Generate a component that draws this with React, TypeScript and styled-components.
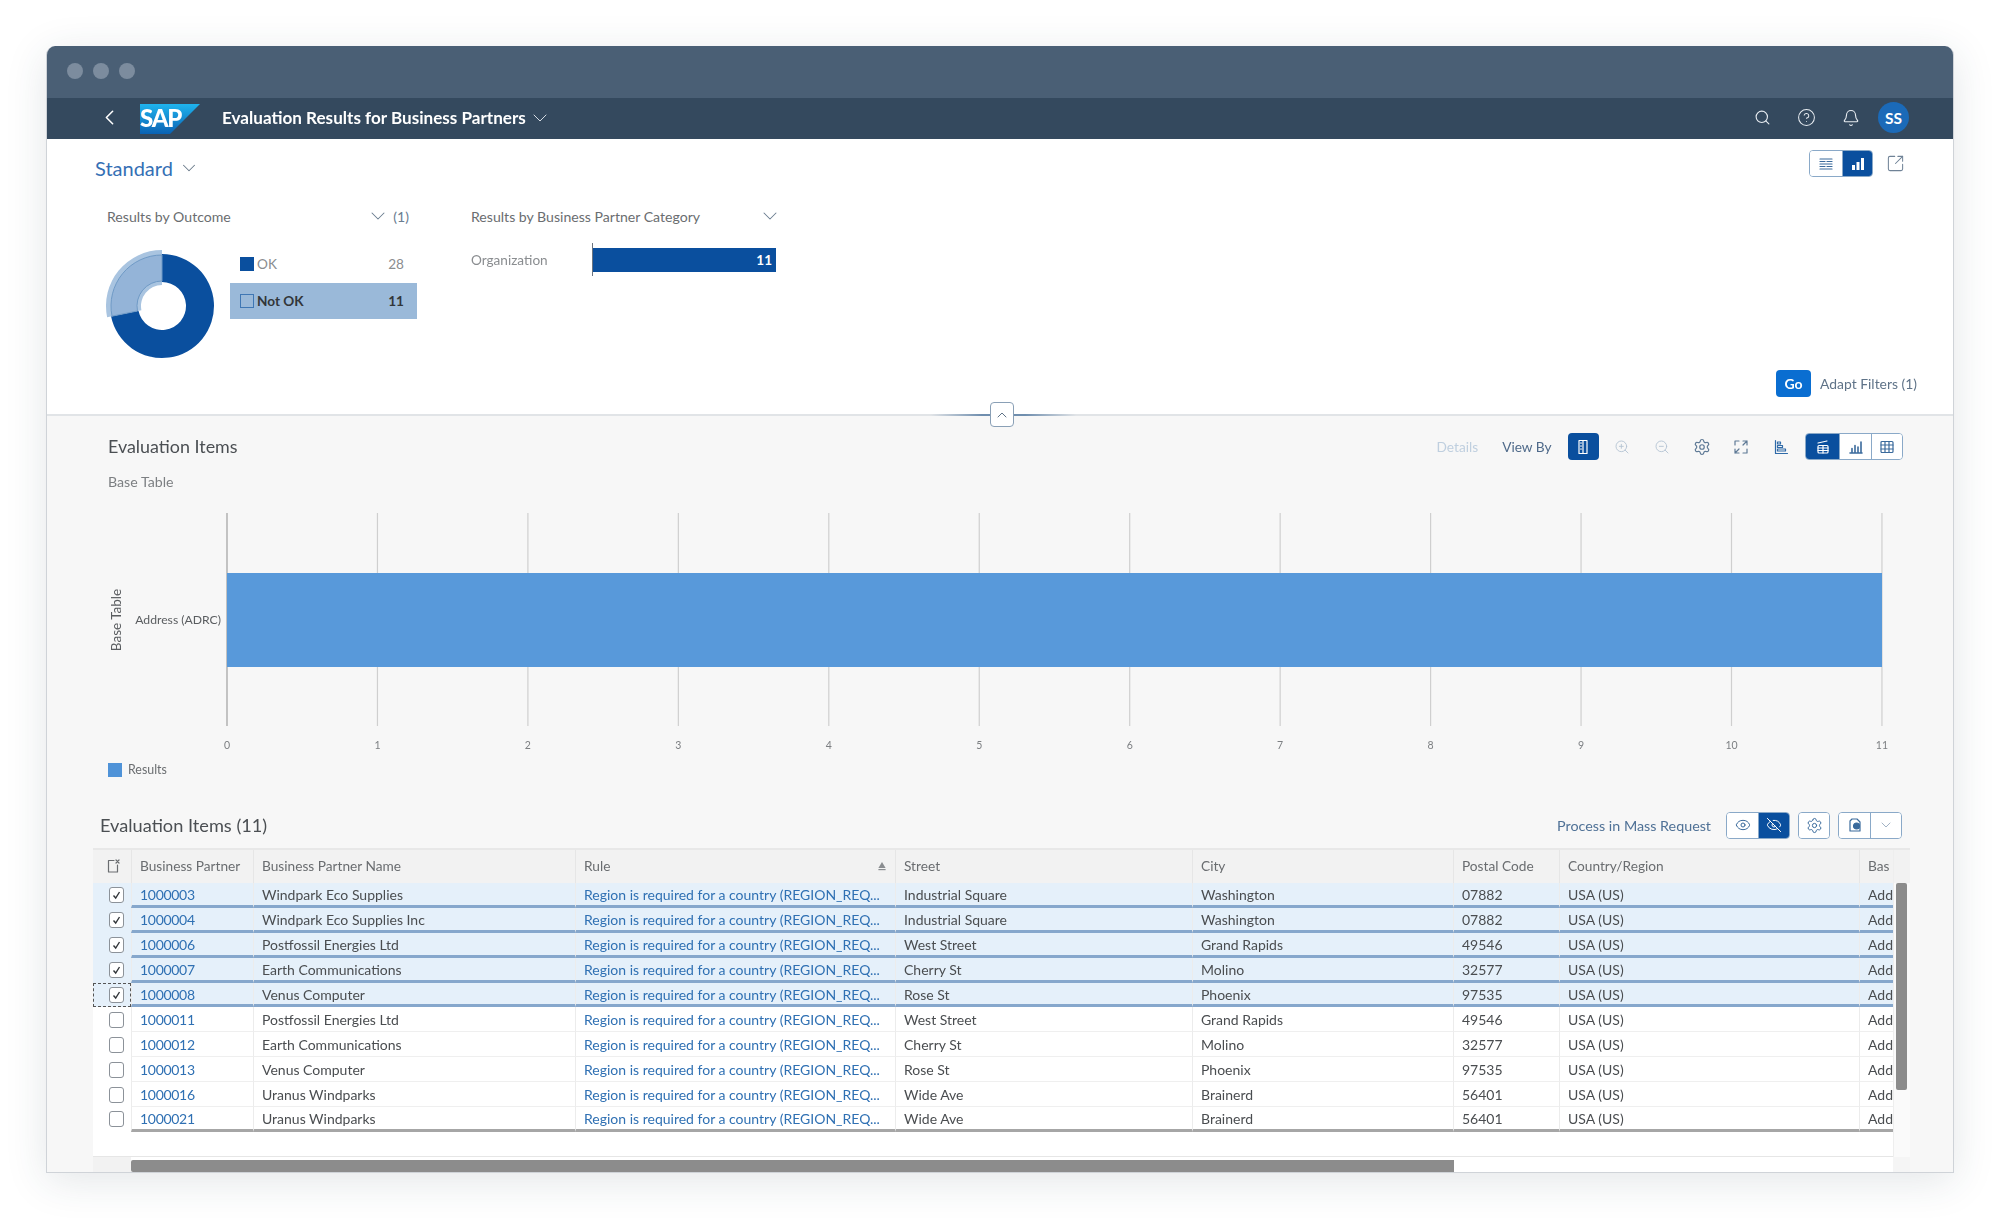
import React from "react";
import styled, { createGlobalStyle } from "styled-components";
import { Search, CircleHelp, Bell, ChevronDown, ChevronLeft, ChevronUp, ZoomIn, ZoomOut, Settings, Eye, EyeOff, SquareArrowOutUpRight } from "lucide-react";

const Global = createGlobalStyle`
  html, body { margin: 0; padding: 0; background: #fff; }
  body { font-family: Lato, "Open Sans", "Liberation Sans", sans-serif; }
  * { box-sizing: border-box; }
`;

const Page = styled.div`
  width: 2000px;
  height: 1218px;
  padding: 46px 46px 45px 46px;
  overflow: hidden;
  filter: blur(0.7px);
`;
const Win = styled.div`
  width: 1908px;
  height: 1127px;
  display: flex;
  flex-direction: column;
  background: #f7f7f7;
  border-radius: 9px 9px 0 0;
  border: 1px solid #cfd3d8;
  border-top: none;
  box-shadow: 0 8px 42px rgba(40, 60, 80, 0.13);
  overflow: hidden;
`;
const TitleBar = styled.div`
  height: 52px;
  flex: none;
  display: flex;
  align-items: center;
  gap: 10px;
  padding: 0 0 2px 20px;
  background: #4a5f75;
`;
const Dot = styled.span`
  width: 16px;
  height: 16px;
  border-radius: 50%;
  background: #7c8c9e;
`;
const Shell = styled.div`
  height: 41px;
  flex: none;
  display: flex;
  align-items: center;
  padding: 0 44px 2px 50px;
  background: #34495e;
  color: #fff;
`;
const BackBtn = styled.span`
  display: flex;
  width: 43px;
  color: #fff;
`;
const Logo = styled.svg`
  flex: none;
  margin-right: 22px;
  margin-top: 2px;
`;
const ShellTitle = styled.span`
  font-size: 17.1px;
  font-weight: 700;
  white-space: nowrap;
`;
const ShellChevron = styled.span`
  display: flex;
  margin-left: 2px;
  color: #d5dce4;
`;
const ShellActions = styled.div`
  margin-left: auto;
  display: flex;
  align-items: center;
  gap: 26px;
  color: #e6ebf0;
`;
const Avatar = styled.span`
  width: 31px;
  height: 31px;
  border-radius: 50%;
  background: #1b6ab8;
  color: #fff;
  font-size: 15.5px;
  font-weight: 700;
  display: flex;
  align-items: center;
  justify-content: center;
  margin-left: -8px;
`;
const FilterArea = styled.section`
  height: 275px;
  flex: none;
  display: flex;
  flex-direction: column;
  background: #fff;
  padding: 11px 36px 17px 48px;
`;
const TopRow = styled.div`
  display: flex;
  align-items: center;
  justify-content: space-between;
  height: 27px;
  padding-right: 12px;
`;
const Variant = styled.div`
  display: flex;
  align-items: center;
  gap: 5px;
  padding-top: 9px;
  font-size: 20px;
  color: #3570b5;
  svg { color: #6a7a8a; }
`;
const TopActions = styled.div`
  display: flex;
  align-items: center;
  gap: 13px;
  color: #6f8296;
`;
const SegGroup = styled.div`
  display: flex;
  height: 27px;
  border: 1.5px solid #8aa9c8;
  border-radius: 4px;
  overflow: hidden;
  background: #fff;
`;
const SegBtn = styled.span<{ $active?: boolean; $w: number }>`
  width: ${(p) => p.$w}px;
  display: flex;
  align-items: center;
  justify-content: center;
  background: ${(p) => (p.$active ? "#0a4f9e" : "#fff")};
  color: ${(p) => (p.$active ? "#fff" : "#3a6a9c")};
  & + & { border-left: 1.5px solid #8aa9c8; }
`;
const FilterCols = styled.div`
  display: flex;
  gap: 54px;
  margin-top: 25px;
  padding-left: 12px;
`;
const FilterCol = styled.div<{ $w: number }>`
  width: ${(p) => p.$w}px;
`;
const FilterHead = styled.div<{ $pad: number }>`
  height: 28px;
  display: flex;
  align-items: center;
  justify-content: space-between;
  font-size: 14.1px;
  color: #6a6d70;
  padding-right: ${(p) => p.$pad}px;
`;
const HeadRight = styled.span`
  display: flex;
  align-items: center;
  gap: 3px;
  color: #6a7d90;
`;
const DonutRow = styled.div`
  display: flex;
  align-items: flex-start;
  margin-top: 17px;
  margin-left: -3px;
`;
const Donut = styled.svg`
  flex: none;
  margin-top: 1px;
  margin-right: 10px;
`;
const Legend = styled.div`
  width: 187px;
  display: flex;
  flex-direction: column;
`;
const LegendRow = styled.div<{ $on?: boolean }>`
  height: ${(p) => (p.$on ? 36 : 33)}px;
  margin-top: ${(p) => (p.$on ? 3 : 0)}px;
  display: flex;
  align-items: center;
  padding: 0 13px 0 10px;
  gap: 3px;
  font-size: 13.6px;
  font-weight: ${(p) => (p.$on ? 700 : 400)};
  color: ${(p) => (p.$on ? "#32363a" : "#8a8d90")};
  background: ${(p) => (p.$on ? "#9ab9d9" : "transparent")};
  b { margin-left: auto; font-weight: inherit; }
`;
const Swatch = styled.span<{ $on?: boolean }>`
  width: 14px;
  height: 14px;
  background: ${(p) => (p.$on ? "transparent" : "#0a4f9e")};
  border: 1px solid ${(p) => (p.$on ? "#3f77b4" : "#0a4f9e")};
`;
const OrgRow = styled.div`
  display: flex;
  align-items: center;
  margin-top: 18px;
  font-size: 13.6px;
  color: #8a8d90;
`;
const OrgLabel = styled.span`
  width: 121px;
`;
const OrgBar = styled.div`
  position: relative;
  width: 184px;
  height: 24px;
  background: #0a4f9e;
  color: #fff;
  font-weight: 700;
  display: flex;
  align-items: center;
  justify-content: flex-end;
  padding-right: 4px;
  font-size: 13.5px;
  &::before {
    content: "";
    position: absolute;
    left: 0;
    top: -5px;
    bottom: -4px;
    width: 1px;
    background: #6a7480;
  }
`;
const GoRow = styled.div`
  margin-top: auto;
  display: flex;
  align-items: center;
  justify-content: flex-end;
  gap: 9px;
  font-size: 13.9px;
  color: #5f7388;
`;
const GoBtn = styled.span`
  width: 35px;
  height: 27px;
  background: #0a6ed1;
  border-radius: 4px;
  color: #fff;
  font-weight: 700;
  font-size: 14px;
  display: flex;
  align-items: center;
  justify-content: center;
`;
const Divider = styled.div`
  position: relative;
  height: 2px;
  flex: none;
  background: #e1e4e7;
  &::before {
    content: "";
    position: absolute;
    left: 884px;
    width: 145px;
    top: 0;
    height: 2px;
    background: linear-gradient(90deg, transparent, #6f8eae 35%, #6f8eae 65%, transparent);
  }
`;
const Collapse = styled.span`
  position: absolute;
  left: 943px;
  top: -12px;
  width: 24px;
  height: 25px;
  background: #fff;
  border: 1.5px solid #8aa0b6;
  border-radius: 4px;
  color: #5f7388;
  display: flex;
  align-items: center;
  justify-content: center;
`;
const Lower = styled.section`
  flex: 1;
  min-height: 0;
  display: flex;
  flex-direction: column;
  background: #f7f7f7;
  padding-top: 17px;
`;
const ChartBar = styled.div`
  display: flex;
  align-items: center;
  height: 27px;
  padding: 0 50px 0 61px;
`;
const ChartTitle = styled.h2`
  margin: 0 0 1px;
  font-size: 17.9px;
  font-weight: 400;
  color: #4b4f53;
`;
const ChartTools = styled.div`
  margin-left: auto;
  display: flex;
  align-items: center;
  font-size: 13.7px;
`;
const TextAct = styled.span<{ $muted?: boolean }>`
  color: ${(p) => (p.$muted ? "#bfcfdf" : "#4f6a8a")};
  margin-right: ${(p) => (p.$muted ? 24 : 16)}px;
`;
const SoloBtn = styled.span`
  width: 31px;
  height: 27px;
  background: #0a4f9e;
  border-radius: 4px;
  color: #fff;
  display: flex;
  align-items: center;
  justify-content: center;
  margin-right: 4px;
`;
const ToolIcon = styled.span<{ $muted?: boolean }>`
  width: 39.7px;
  display: flex;
  justify-content: center;
  color: ${(p) => (p.$muted ? "#b6c5d4" : "#5f7a96")};
`;
const SubTitle = styled.div`
  margin: 14px 0 0 61px;
  height: 16px;
  line-height: 16px;
  font-size: 14.2px;
  color: #7c7f82;
`;
const Chart = styled.svg`
  display: block;
  margin: 10px 0 0 61px;
  flex: none;
  overflow: visible;
  font-family: Lato, "Liberation Sans", sans-serif;
`;
const TableBar = styled.div`
  height: 26px;
  margin-top: 32px;
  display: flex;
  align-items: center;
  padding: 0 51px 0 53px;
`;
const TableTitle = styled.h3`
  margin: 0;
  font-size: 18.2px;
  font-weight: 400;
  color: #4b4f53;
`;
const TableTools = styled.div`
  margin-left: auto;
  display: flex;
  align-items: center;
  gap: 8px;
  font-size: 14.3px;
  color: #4f7196;
`;
const MassLabel = styled.span`
  margin-right: 7px;
`;
const Frame = styled.div`
  margin: 10px 0 0 46px;
  width: 1817px;
  flex: 1;
  min-height: 0;
  display: flex;
  flex-direction: column;
  background: #fff;
  border-top: 2px solid #e8e8e8;
`;
const FrameMain = styled.div`
  display: flex;
  flex: 1;
  min-height: 0;
`;
const GridArea = styled.div`
  width: 1800px;
  display: flex;
  flex-direction: column;
  border-bottom: 1px solid #e6e6e6;
`;
const cols = "38px 122px 322px 320px 297px 261px 106px 300px 34px";
const HeadRow = styled.div`
  display: grid;
  grid-template-columns: ${cols};
  height: 33px;
  background: #f2f2f2;
  font-size: 13.7px;
  color: #6a6d70;
`;
const HeadCell = styled.div`
  display: flex;
  align-items: center;
  justify-content: space-between;
  padding: 0 7px 2px 8px;
  border-left: 1px solid #e6e6e6;
  white-space: nowrap;
  overflow: hidden;
  &:first-child { border-left: none; justify-content: flex-start; padding-left: 12px; }
  &:last-child { padding-right: 0; }
`;
const Row = styled.div<{ $sel?: boolean }>`
  display: grid;
  grid-template-columns: ${cols};
  height: 24.9px;
  font-size: 14px;
  color: #4a4d50;
  background: ${(p) => (p.$sel ? "#e5f0fa" : "#fff")};
`;
const CheckCell = styled.div<{ $focus?: boolean }>`
  display: flex;
  align-items: center;
  padding-left: 16px;
  outline: ${(p) => (p.$focus ? "1px dashed #555" : "none")};
  outline-offset: -1px;
`;
const Cell = styled.div<{ $line: string; $h: number; $link?: boolean }>`
  display: flex;
  align-items: center;
  padding: ${(p) => p.$h - 1}px 0 0 8px;
  border-left: 1px solid #ececec;
  border-bottom: ${(p) => p.$h}px solid ${(p) => p.$line};
  color: ${(p) => (p.$link ? "#2f70b3" : "inherit")};
  white-space: nowrap;
  overflow: hidden;
`;
const PartnerId = styled.span`
  letter-spacing: -0.3px;
`;
const Check = styled.span`
  width: 15px;
  height: 16px;
  background: #fff;
  border: 1.3px solid #8c9299;
  border-radius: 3px;
  display: flex;
  align-items: center;
  justify-content: center;
`;
const BlankFill = styled.div`
  flex: 1;
`;
const VTrack = styled.div`
  width: 17px;
  display: flex;
  flex-direction: column;
  background: #fafafa;
  border-left: 1px solid #eee;
`;
const VHead = styled.div`
  height: 33px;
  background: #f2f2f2;
`;
const VThumb = styled.div`
  width: 11px;
  height: 207px;
  margin-left: 2px;
  background: #8c8c8c;
  border-radius: 2px;
`;
const HTrack = styled.div`
  height: 15px;
  flex: none;
  display: flex;
  align-items: flex-end;
  background: #fff;
`;
const HCorner = styled.div`
  width: 38px;
  height: 15px;
  background: #f2f2f2;
`;
const HThumb = styled.div`
  width: 1323px;
  height: 12px;
  background: #8c8c8c;
  border-radius: 2px 0 0 2px;
`;
const HEnd = styled.div`
  margin-left: auto;
  width: 17px;
  height: 15px;
  background: #f5f5f5;
`;

const I = ({ children, s = 16 }: { children: React.ReactNode; s?: number }) => (
  <svg width={s} height={s} viewBox="0 0 16 16" fill="none" stroke="currentColor" strokeWidth="1.2" strokeLinecap="round" strokeLinejoin="round">
    {children}
  </svg>
);

const data: [string, string, string, string, string][] = [
  ["1000003", "Windpark Eco Supplies", "Industrial Square", "Washington", "07882"],
  ["1000004", "Windpark Eco Supplies Inc", "Industrial Square", "Washington", "07882"],
  ["1000006", "Postfossil Energies Ltd", "West Street", "Grand Rapids", "49546"],
  ["1000007", "Earth Communications", "Cherry St", "Molino", "32577"],
  ["1000008", "Venus Computer", "Rose St", "Phoenix", "97535"],
  ["1000011", "Postfossil Energies Ltd", "West Street", "Grand Rapids", "49546"],
  ["1000012", "Earth Communications", "Cherry St", "Molino", "32577"],
  ["1000013", "Venus Computer", "Rose St", "Phoenix", "97535"],
  ["1000016", "Uranus Windparks", "Wide Ave", "Brainerd", "56401"],
  ["1000021", "Uranus Windparks", "Wide Ave", "Brainerd", "56401"],
];

const arc = (r1: number, r2: number, a0: number, a1: number, c = 58) => {
  const p = (r: number, a: number) => {
    const t = ((a - 90) * Math.PI) / 180;
    return `${(c + r * Math.cos(t)).toFixed(2)} ${(c + r * Math.sin(t)).toFixed(2)}`;
  };
  const large = a1 - a0 > 180 ? 1 : 0;
  return `M${p(r2, a0)} A${r2} ${r2} 0 ${large} 1 ${p(r2, a1)} L${p(r1, a1)} A${r1} ${r1} 0 ${large} 0 ${p(r1, a0)} Z`;
};

const ticks = Array.from({ length: 12 }, (_, i) => i);

export default function App() {
  return (
    <Page>
      <Global />
      <Win>
        <TitleBar>
          <Dot />
          <Dot />
          <Dot />
        </TitleBar>
        <Shell>
          <BackBtn>
            <ChevronLeft size={25} strokeWidth={1.5} />
          </BackBtn>
          <Logo width="60" height="30" viewBox="0 0 60 30">
            <defs>
              <linearGradient id="sapg" x1="0" y1="0" x2="0" y2="1">
                <stop offset="0" stopColor="#1fb4ee" />
                <stop offset="1" stopColor="#0a62b4" />
              </linearGradient>
            </defs>
            <polygon points="0,0 60,0 30,30 0,30" fill="url(#sapg)" />
            <text x="0" y="23" fill="#fff" fontSize="24" fontWeight="900" fontFamily="Lato, Liberation Sans, sans-serif" letterSpacing="-1.2">SAP</text>
          </Logo>
          <ShellTitle>Evaluation Results for Business Partners</ShellTitle>
          <ShellChevron>
            <ChevronDown size={24} strokeWidth={1} />
          </ShellChevron>
          <ShellActions>
            <Search size={17} strokeWidth={1.6} />
            <CircleHelp size={19} strokeWidth={1.3} />
            <Bell size={18} strokeWidth={1.5} />
            <Avatar>SS</Avatar>
          </ShellActions>
        </Shell>
        <FilterArea>
          <TopRow>
            <Variant>
              Standard
              <ChevronDown size={22} strokeWidth={1.1} />
            </Variant>
            <TopActions>
              <SegGroup>
                <SegBtn $w={32}>
                  <I>
                    <path d="M2 3h12M2 5.5h5M9 5.5h5M2 8h12M2 10.5h5M9 10.5h5M2 13h12" />
                  </I>
                </SegBtn>
                <SegBtn $w={30} $active>
                  <svg width="16" height="16" viewBox="0 0 16 16" fill="currentColor">
                    <rect x="2" y="9" width="3" height="5" />
                    <rect x="6.5" y="6" width="3" height="8" />
                    <rect x="11" y="2" width="3" height="12" />
                  </svg>
                </SegBtn>
              </SegGroup>
              <SquareArrowOutUpRight size={19} strokeWidth={1.3} />
            </TopActions>
          </TopRow>
          <FilterCols>
            <FilterCol $w={310}>
              <FilterHead $pad={8}>
                <span>Results by Outcome</span>
                <HeadRight>
                  <ChevronDown size={24} strokeWidth={1.05} />
                  (1)
                </HeadRight>
              </FilterHead>
              <DonutRow>
                <Donut width="116" height="116" viewBox="0 0 116 116">
                  <path d={arc(24, 52, 0, 258.5)} fill="#0a4f9e" />
                  <path d={arc(21, 56, 258.5, 360)} fill="#a9c4e0" />
                  <path d={arc(25, 51, 258.5, 360)} fill="#94b4d8" stroke="#6f9ac6" strokeWidth="1" />
                </Donut>
                <Legend>
                  <LegendRow>
                    <Swatch />
                    OK
                    <b>28</b>
                  </LegendRow>
                  <LegendRow $on>
                    <Swatch $on />
                    Not OK
                    <b>11</b>
                  </LegendRow>
                </Legend>
              </DonutRow>
            </FilterCol>
            <FilterCol $w={305}>
              <FilterHead $pad={0}>
                <span>Results by Business Partner Category</span>
                <HeadRight style={{ marginRight: -6 }}>
                  <ChevronDown size={24} strokeWidth={1.05} />
                </HeadRight>
              </FilterHead>
              <OrgRow>
                <OrgLabel>Organization</OrgLabel>
                <OrgBar>11</OrgBar>
              </OrgRow>
            </FilterCol>
          </FilterCols>
          <GoRow>
            <GoBtn>Go</GoBtn>
            Adapt Filters (1)
          </GoRow>
        </FilterArea>
        <Divider>
          <Collapse>
            <ChevronUp size={16} strokeWidth={1.5} />
          </Collapse>
        </Divider>
        <Lower>
          <ChartBar>
            <ChartTitle>Evaluation Items</ChartTitle>
            <ChartTools>
              <TextAct $muted>Details</TextAct>
              <TextAct>View By</TextAct>
              <SoloBtn>
                <I>
                  <rect x="4" y="1.5" width="8" height="13" />
                  <path d="M8 1.5v13M5.5 4h1M5.5 7h1M5.5 10h1" />
                </I>
              </SoloBtn>
              <ToolIcon $muted>
                <ZoomIn size={16} strokeWidth={1.4} />
              </ToolIcon>
              <ToolIcon $muted>
                <ZoomOut size={16} strokeWidth={1.4} />
              </ToolIcon>
              <ToolIcon>
                <Settings size={18} strokeWidth={1.6} />
              </ToolIcon>
              <ToolIcon>
                <I>
                  <path d="M2 6V2h4M10 2h4v4M14 10v4h-4M6 14H2v-4M14 2L10 6M2 14l4-4" />
                </I>
              </ToolIcon>
              <ToolIcon style={{ color: "#2f6aa8" }}>
                <I>
                  <path d="M2.5 1.5v13h12" />
                  <rect x="4.5" y="3" width="3" height="2" />
                  <rect x="4.5" y="6.5" width="5" height="2" />
                  <rect x="4.5" y="10" width="8" height="2" />
                </I>
              </ToolIcon>
              <SegGroup style={{ marginLeft: 4 }}>
                <SegBtn $w={33} $active>
                  <I>
                    <path d="M3 4l9-2" />
                    <rect x="3" y="6.5" width="10" height="7.5" rx="1" />
                    <path d="M3 9h10M3 11.5h10M8 6.5v7.5" />
                  </I>
                </SegBtn>
                <SegBtn $w={32}>
                  <I>
                    <path d="M2 14h12M4 13V9.5M7 13V6.5M10 13V8M13 13V3" strokeWidth="1.6" />
                  </I>
                </SegBtn>
                <SegBtn $w={31}>
                  <I>
                    <rect x="2" y="2.5" width="12" height="11" rx="1" />
                    <path d="M2 6h12M2 10h12M6 2.5v11M10 2.5v11" />
                  </I>
                </SegBtn>
              </SegGroup>
            </ChartTools>
          </ChartBar>
          <SubTitle>Base Table</SubTitle>
          <Chart width="1800" height="280" viewBox="0 0 1800 280">
            {ticks.map((t) => {
              const x = 119 + t * 150.45;
              return (
                <g key={t}>
                  <line x1={x} x2={x} y1={13} y2={226} stroke={t === 0 ? "#b5b5b5" : "#cfcfcf"} strokeWidth={t === 0 ? 1.6 : 1.2} />
                  <text x={x} y={249} fontSize="10.5" textAnchor="middle" fill="#7c7f82">
                    {t}
                  </text>
                </g>
              );
            })}
            <rect x="119" y="73" width="1655" height="94" fill="#5899da" />
            <text x="113" y="124" fontSize="12.2" textAnchor="end" fill="#5a5d60">
              Address (ADRC)
            </text>
            <text transform="translate(13 120) rotate(-90)" fontSize="13.5" textAnchor="middle" fill="#5a5d60">
              Base Table
            </text>
            <rect x="0" y="263" width="14" height="14" fill="#4f93d8" />
            <text x="20" y="274" fontSize="12.4" fill="#6a6d70">
              Results
            </text>
          </Chart>
          <TableBar>
            <TableTitle>Evaluation Items (11)</TableTitle>
            <TableTools>
              <MassLabel>Process in Mass Request</MassLabel>
              <SegGroup>
                <SegBtn $w={31}>
                  <Eye size={16} strokeWidth={1.5} />
                </SegBtn>
                <SegBtn $w={31} $active>
                  <EyeOff size={16} strokeWidth={1.5} />
                </SegBtn>
              </SegGroup>
              <SegGroup>
                <SegBtn $w={30}>
                  <Settings size={17} strokeWidth={1.4} />
                </SegBtn>
              </SegGroup>
              <SegGroup>
                <SegBtn $w={31}>
                  <I>
                    <path d="M5 2h5l3 3v9H3V4z" />
                    <circle cx="9.5" cy="9" r="3" fill="currentColor" />
                  </I>
                </SegBtn>
                <SegBtn $w={31}>
                  <ChevronDown size={16} strokeWidth={1.2} color="#8aa0b6" />
                </SegBtn>
              </SegGroup>
            </TableTools>
          </TableBar>
          <Frame>
            <FrameMain>
              <GridArea>
                <HeadRow>
                  <HeadCell>
                    <I>
                      <path d="M9 2.5H3.5v11.5h9V7" />
                      <path d="M11 2l3 3M14 2l-3 3" />
                    </I>
                  </HeadCell>
                  <HeadCell>Business Partner</HeadCell>
                  <HeadCell>Business Partner Name</HeadCell>
                  <HeadCell>
                    Rule
                    <svg width="12" height="12" viewBox="0 0 12 12" fill="#8a8d90">
                      <path d="M6 2l3.6 6H2.4z" />
                      <rect x="2.4" y="9" width="7.2" height="1.2" />
                    </svg>
                  </HeadCell>
                  <HeadCell>Street</HeadCell>
                  <HeadCell>City</HeadCell>
                  <HeadCell>Postal Code</HeadCell>
                  <HeadCell>Country/Region</HeadCell>
                  <HeadCell>Bas</HeadCell>
                </HeadRow>
                {data.map((d, i) => {
                  const sel = i < 5;
                  const line = sel ? "#86a7cc" : i === 9 ? "#a6a6a6" : "#efefef";
                  const h = sel || i === 9 ? 3 : 1;
                  return (
                    <Row key={d[0]} $sel={sel}>
                      <CheckCell $focus={i === 4}>
                        <Check>
                          {sel && (
                            <svg width="11" height="11" viewBox="0 0 11 11" fill="none" stroke="#32363a" strokeWidth="1.4">
                              <path d="M2.5 5.5l2.2 2.5 3.8-6" />
                            </svg>
                          )}
                        </Check>
                      </CheckCell>
                      <Cell $line={line} $h={h} $link>
                        <PartnerId>{d[0]}</PartnerId>
                      </Cell>
                      <Cell $line={line} $h={h}>{d[1]}</Cell>
                      <Cell $line={line} $h={h} $link>Region is required for a country (REGION_REQ...</Cell>
                      <Cell $line={line} $h={h}>{d[2]}</Cell>
                      <Cell $line={line} $h={h}>{d[3]}</Cell>
                      <Cell $line={line} $h={h}>{d[4]}</Cell>
                      <Cell $line={line} $h={h}>USA (US)</Cell>
                      <Cell $line={line} $h={h}>Add</Cell>
                    </Row>
                  );
                })}
                <BlankFill />
              </GridArea>
              <VTrack>
                <VHead />
                <VThumb />
              </VTrack>
            </FrameMain>
            <HTrack>
              <HCorner />
              <HThumb />
              <HEnd />
            </HTrack>
          </Frame>
        </Lower>
      </Win>
    </Page>
  );
}
